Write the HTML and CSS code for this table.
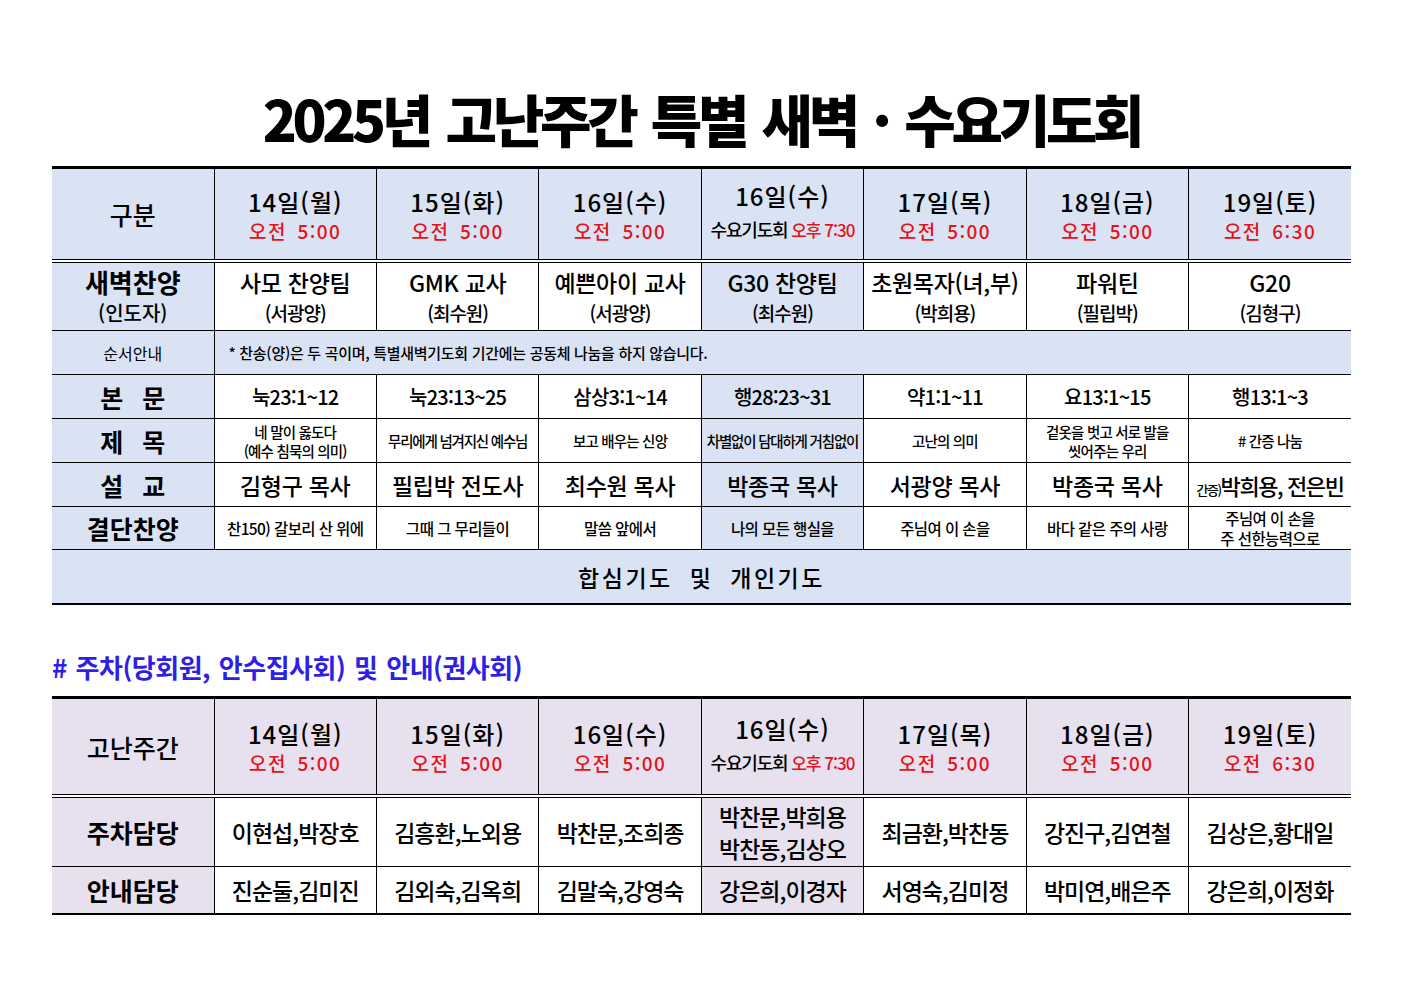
FILE: index.html
```html
<!DOCTYPE html>
<html lang="ko">
<head>
<meta charset="utf-8">
<link rel="stylesheet" href="styles.css">
</head>
<body>
<div class="page">
  <h1 class="title">2025년 고난주간 특별 새벽 · 수요기도회</h1>

  <table class="sched blue">
    <colgroup><col class="c0"><col><col><col><col><col><col><col></colgroup>
    <tr class="head">
      <th class="lab big">구분</th>
      <th><div class="day">14일(월)</div><div class="time">오전 5:00</div></th>
      <th><div class="day">15일(화)</div><div class="time">오전 5:00</div></th>
      <th><div class="day">16일(수)</div><div class="time">오전 5:00</div></th>
      <th><div class="day day-up">16일(수)</div><div class="wed">수요기도회 <span class="wed-t">오후 7:30</span></div></th>
      <th><div class="day">17일(목)</div><div class="time">오전 5:00</div></th>
      <th><div class="day">18일(금)</div><div class="time">오전 5:00</div></th>
      <th><div class="day">19일(토)</div><div class="time">오전 6:30</div></th>
    </tr>
    <tr class="r-lead">
      <td class="lab"><div class="lab-b">새벽찬양</div><div class="lab-s">(인도자)</div></td>
      <td><div class="lead">사모 찬양팀</div><div class="sub">(서광양)</div></td>
      <td><div class="lead">GMK 교사</div><div class="sub">(최수원)</div></td>
      <td><div class="lead">예쁜아이 교사</div><div class="sub">(서광양)</div></td>
      <td class="hl"><div class="lead">G30 찬양팀</div><div class="sub">(최수원)</div></td>
      <td><div class="lead">초원목자(녀,부)</div><div class="sub">(박희용)</div></td>
      <td><div class="lead">파워틴</div><div class="sub">(필립박)</div></td>
      <td><div class="lead">G20</div><div class="sub">(김형구)</div></td>
    </tr>
    <tr class="r-note">
      <td class="lab small">순서안내</td>
      <td colspan="7" class="note">* 찬송(양)은 두 곡이며, 특별새벽기도회 기간에는 공동체 나눔을 하지 않습니다.</td>
    </tr>
    <tr class="r-44">
      <td class="lab big sp">본 문</td>
      <td class="txt">눅23:1~12</td>
      <td class="txt">눅23:13~25</td>
      <td class="txt">삼상3:1~14</td>
      <td class="txt hl">행28:23~31</td>
      <td class="txt">약1:1~11</td>
      <td class="txt">요13:1~15</td>
      <td class="txt">행13:1~3</td>
    </tr>
    <tr class="r-44">
      <td class="lab big sp">제 목</td>
      <td class="tiny">네 말이 옳도다<br>(예수 침묵의 의미)</td>
      <td class="tiny cond">무리에게 넘겨지신 예수님</td>
      <td class="tiny">보고 배우는 신앙</td>
      <td class="tiny cond hl">차별없이 담대하게 거침없이</td>
      <td class="tiny">고난의 의미</td>
      <td class="tiny">겉옷을 벗고 서로 발을<br>씻어주는 우리</td>
      <td class="tiny"># 간증 나눔</td>
    </tr>
    <tr class="r-44">
      <td class="lab big sp">설 교</td>
      <td class="name">김형구 목사</td>
      <td class="name">필립박 전도사</td>
      <td class="name">최수원 목사</td>
      <td class="name hl">박종국 목사</td>
      <td class="name">서광양 목사</td>
      <td class="name">박종국 목사</td>
      <td class="name tight"><span class="mini">간증)</span>박희용, 전은빈</td>
    </tr>
    <tr class="r-43">
      <td class="lab big">결단찬양</td>
      <td class="song">찬150) 갈보리 산 위에</td>
      <td class="song">그때 그 무리들이</td>
      <td class="song">말씀 앞에서</td>
      <td class="song hl">나의 모든 행실을</td>
      <td class="song">주님여 이 손을</td>
      <td class="song">바다 같은 주의 사랑</td>
      <td class="song">주님여 이 손을<br>주 선한능력으로</td>
    </tr>
    <tr class="r-pray">
      <td colspan="8" class="pray">합심기도 및 개인기도</td>
    </tr>
  </table>

  <h2 class="section"># 주차(당회원, 안수집사회) 및 안내(권사회)</h2>

  <table class="sched purple">
    <colgroup><col class="c0"><col><col><col><col><col><col><col></colgroup>
    <tr class="head head2">
      <th class="lab big">고난주간</th>
      <th><div class="day">14일(월)</div><div class="time">오전 5:00</div></th>
      <th><div class="day">15일(화)</div><div class="time">오전 5:00</div></th>
      <th><div class="day">16일(수)</div><div class="time">오전 5:00</div></th>
      <th><div class="day day-up">16일(수)</div><div class="wed">수요기도회 <span class="wed-t">오후 7:30</span></div></th>
      <th><div class="day">17일(목)</div><div class="time">오전 5:00</div></th>
      <th><div class="day">18일(금)</div><div class="time">오전 5:00</div></th>
      <th><div class="day">19일(토)</div><div class="time">오전 6:30</div></th>
    </tr>
    <tr class="r-park">
      <td class="lab big">주차담당</td>
      <td class="person">이현섭,박장호</td>
      <td class="person">김흥환,노외용</td>
      <td class="person">박찬문,조희종</td>
      <td class="person two hl"><div>박찬문,박희용</div><div>박찬동,김상오</div></td>
      <td class="person">최금환,박찬동</td>
      <td class="person">강진구,김연철</td>
      <td class="person">김상은,황대일</td>
    </tr>
    <tr class="r-guide">
      <td class="lab big">안내담당</td>
      <td class="person">진순둘,김미진</td>
      <td class="person">김외숙,김옥희</td>
      <td class="person">김말숙,강영숙</td>
      <td class="person hl">강은희,이경자</td>
      <td class="person">서영숙,김미정</td>
      <td class="person">박미연,배은주</td>
      <td class="person">강은희,이정화</td>
    </tr>
  </table>
</div>
</body>
</html>
```

FILE: styles.css
```css
html, body {
  margin: 0;
  padding: 0;
  background: #ffffff;
}
body {
  font-family: "Noto Sans CJK KR", "Noto Sans", sans-serif;
  color: #000;
}
.page {
  padding: 0 0 0 52px;
  width: 1299px;
}
.title {
  margin: 0;
  display: flex;
  align-items: center;
  justify-content: center;
  height: 166px;
  box-sizing: border-box;
  padding-top: 80px;
  padding-bottom: 10px;
  font-size: 56px;
  line-height: 1;
  font-weight: 900;
  letter-spacing: -4.3px;
  word-spacing: 5px;
}

.sched {
  width: 1299px;
  table-layout: fixed;
  border-collapse: collapse;
  border-top: 3px solid #000;
  border-bottom: 2px solid #000;
}
.sched col.c0 { width: 162px; }
.sched th, .sched td {
  border: 1px solid #000;
  padding: 0;
  text-align: center;
  vertical-align: middle;
  font-weight: 500;
  overflow: hidden;
  white-space: nowrap;
}
.sched tr > :first-child { border-left: none; }
.sched tr > :last-child { border-right: none; }

.blue .head th, .blue .lab, .blue .hl, .blue .r-note td, .blue .pray { background: #dae3f3; }
.purple .head th, .purple .lab, .purple .hl { background: #e6e0ef; }

.head th { height: 90px; border-bottom: 4px double #000; }
.head2 th { height: 95px; }
.day {
  font-size: 24px;
  line-height: 31px;
  font-weight: 500;
  letter-spacing: 1px;
  margin-top: 2px;
}
.day-up { margin-top: -4px; }
.time {
  font-size: 19px;
  line-height: 28px;
  color: #e8101a;
  letter-spacing: 1.4px;
  word-spacing: 4px;
  font-weight: 500;
}
.wed {
  font-size: 18px;
  line-height: 28px;
  font-weight: 500;
  letter-spacing: -1.2px;
  margin-top: 4px;
}
.wed-t {
  color: #e8101a;
  font-size: 17px;
  letter-spacing: -1px;
}

.lab.big { font-size: 25px; font-weight: 700; }
.lab.sp { word-spacing: 12px; }
.lab.small { font-size: 16px; font-weight: 400; }
.head .lab.big { font-size: 25px; font-weight: 500; }

.r-lead td { height: 67px; }
.lab-b { font-size: 26px; font-weight: 700; line-height: 32px; }
.lab-s { font-size: 20px; line-height: 30px; font-weight: 500; }
.lead { font-size: 23px; line-height: 32px; font-weight: 500; letter-spacing: -0.3px; }
.sub { font-size: 19px; line-height: 29px; font-weight: 500; letter-spacing: -1px; }

.r-note td { height: 43px; }
.note {
  text-align: left !important;
  padding-left: 14px !important;
  font-size: 15px;
  font-weight: 400;
  letter-spacing: -0.3px;
}

.r-44 td { height: 43px; }
.r-43 td { height: 42px; }
.txt { font-size: 20px; letter-spacing: -0.8px; font-weight: 400; }
.tiny { font-size: 14.5px; line-height: 19px; letter-spacing: -0.8px; font-weight: 400; }
.tiny.cond { letter-spacing: -1.2px; }
.name { font-size: 23px; font-weight: 500; letter-spacing: -0.3px; }
.name.tight { font-size: 22px; letter-spacing: -1.4px; }
.mini { font-size: 13px; letter-spacing: -1.5px; }
.song { font-size: 15.5px; line-height: 20px; letter-spacing: -0.6px; font-weight: 400; }

.r-pray td { height: 53px; }
.pray {
  font-size: 23px;
  font-weight: 700;
  letter-spacing: 2.5px;
  word-spacing: 8px;
}

.section {
  margin: 0;
  height: 91px;
  box-sizing: border-box;
  padding-top: 45px;
  font-size: 26px;
  line-height: 34px;
  font-weight: 700;
  color: #2f1fe6;
  letter-spacing: -0.5px;
  word-spacing: 2px;
}

.r-park td { height: 68px; }
.r-guide td { height: 46px; }
.person { font-size: 23px; font-weight: 500; letter-spacing: -1px; }
.person.two div { line-height: 32px; }
```
